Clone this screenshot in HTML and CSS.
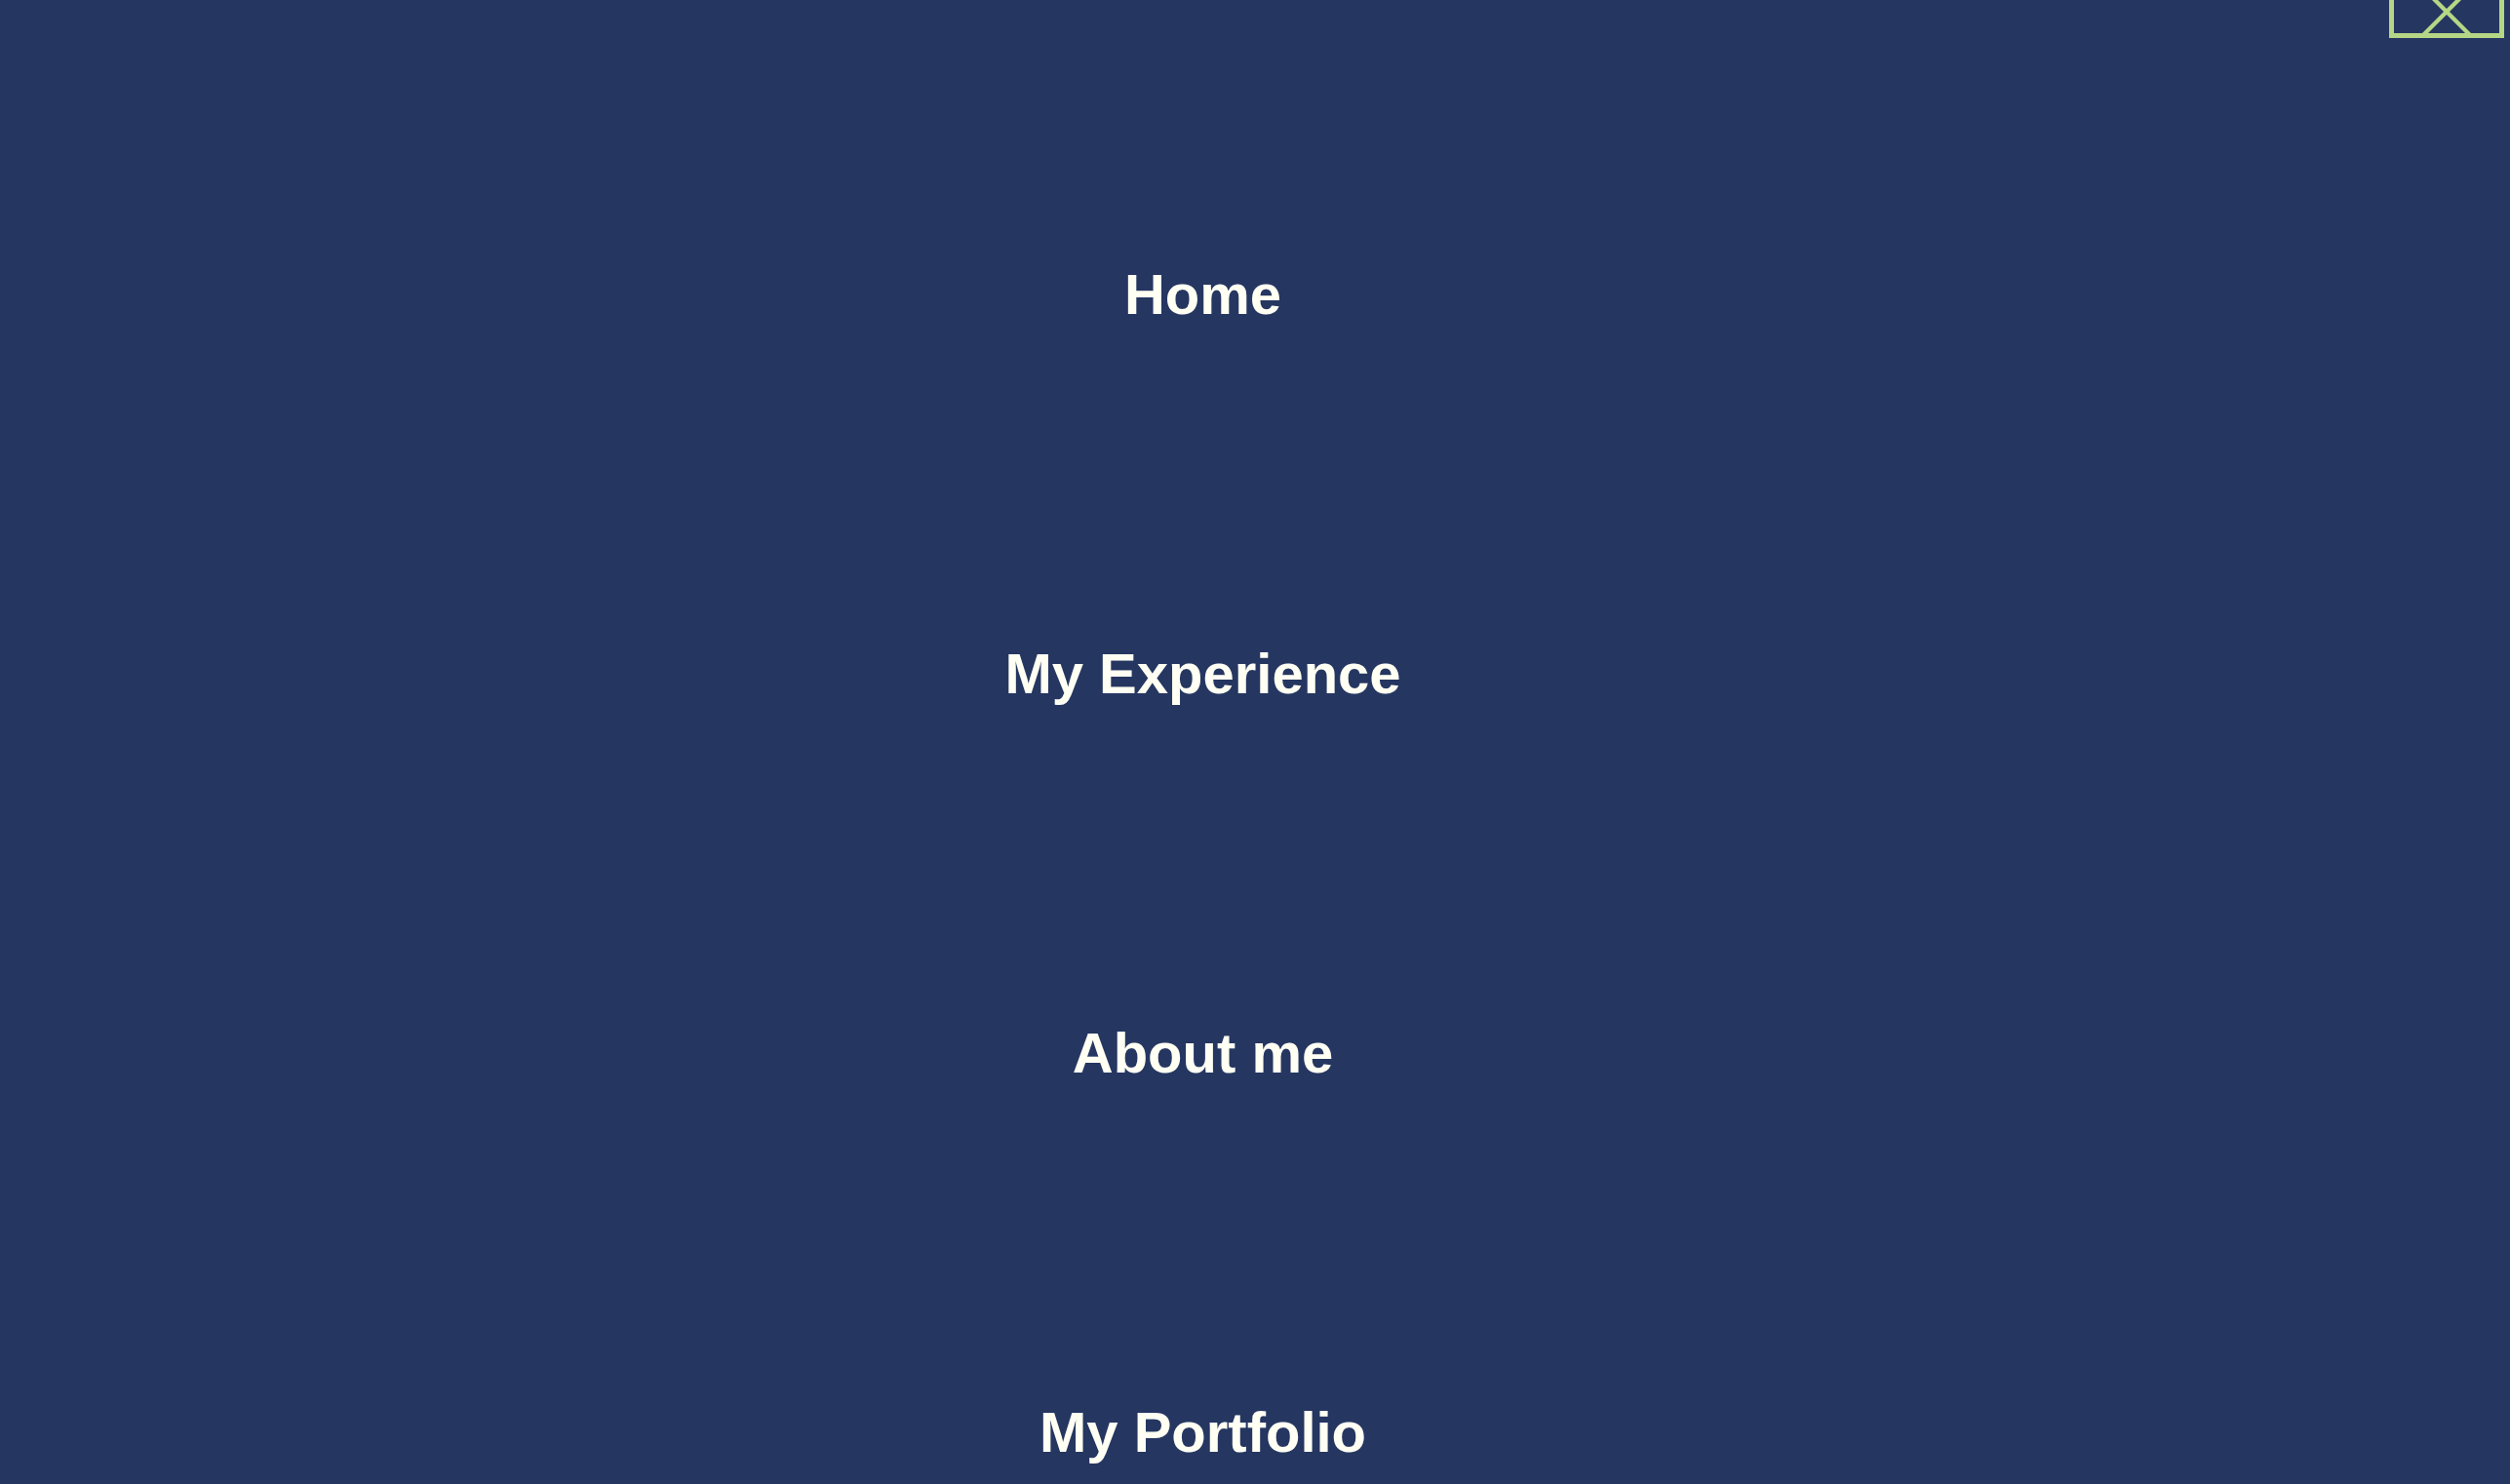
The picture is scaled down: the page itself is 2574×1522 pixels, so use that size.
FILE: index.html
```html
<!DOCTYPE html>
<html lang="en">
<head>
<meta charset="utf-8">
<title>Menu</title>
<link rel="stylesheet" href="styles.css">
</head>
<body>
<div class="overlay">
  <nav class="menu">
    <ul class="menu-list">
      <li class="menu-item"><a href="#">Home</a></li>
      <li class="menu-item"><a href="#">My Experience</a></li>
      <li class="menu-item"><a href="#">About me</a></li>
      <li class="menu-item"><a href="#">My Portfolio</a></li>
    </ul>
  </nav>
  <button class="close-btn" aria-label="Close menu">
    <svg class="close-icon" width="108" height="44" viewBox="0 0 108 44">
      <line x1="20" y1="-12" x2="88" y2="56" />
      <line x1="88" y1="-12" x2="20" y2="56" />
    </svg>
  </button>
</div>
</body>
</html>
```

FILE: styles.css
```css
html, body {
  margin: 0;
  padding: 0;
  height: 100%;
}

body {
  background: #253661;
  overflow: hidden;
  font-family: "Liberation Sans", Arial, Helvetica, sans-serif;
}

.overlay {
  position: relative;
  min-height: 100%;
}

.menu {
  padding-right: 107px;
}

.menu-list {
  list-style: none;
  margin: 0;
  padding: 269px 0 0 0;
  display: flex;
  flex-direction: column;
  align-items: center;
  gap: 323px;
}

.menu-item {
  font-size: 58px;
  line-height: 66px;
  font-weight: 700;
}

.menu-item a {
  color: #fffff3;
  text-decoration: none;
}

.close-btn {
  position: absolute;
  top: -15px;
  right: 6px;
  width: 118px;
  height: 54px;
  padding: 0;
  margin: 0;
  background: transparent;
  border: 5px solid #b5d785;
  box-sizing: border-box;
  overflow: hidden;
  display: block;
}

.close-icon {
  display: block;
}

.close-icon line {
  stroke: #b5d785;
  stroke-width: 4.2;
}
```
